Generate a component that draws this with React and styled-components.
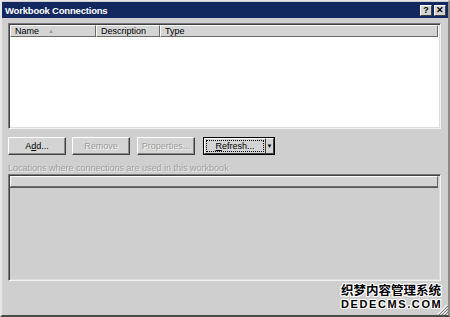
import React from 'react';
import styled, { createGlobalStyle } from 'styled-components';

const GlobalStyle = createGlobalStyle`
  * { box-sizing: border-box; }
  body {
    margin: 0;
    background: #cfcfcf;
    font-family: "Liberation Sans", Arial, sans-serif;
  }
`;

const Window = styled.div`
  position: relative;
  width: 450px;
  height: 317px;
  background: #cfcfcf;
  border-top: 1px solid #e6e6e6;
  border-left: 2px solid #e6e6e6;
  border-right: 2px solid #8a8a8a;
  border-bottom: 2px solid #4a4a4a;
  display: flex;
  flex-direction: column;
  overflow: hidden;
`;

const TitleBar = styled.div`
  height: 16px;
  margin-top: 1px;
  background: #13285f;
  color: #fff;
  display: flex;
  align-items: center;
  padding: 0 2px 0 3px;
`;

const Title = styled.div`
  flex: 1;
  font-size: 9.5px;
  font-weight: bold;
  letter-spacing: -0.2px;
`;

const CapButton = styled.div`
  width: 12px;
  height: 11px;
  margin-left: 2px;
  background: #d4d4d4;
  border-top: 1px solid #fff;
  border-left: 1px solid #fff;
  border-right: 1px solid #404040;
  border-bottom: 1px solid #404040;
  color: #000;
  font-size: 9px;
  font-weight: bold;
  line-height: 9px;
  text-align: center;
`;

const Body = styled.div`
  flex: 1;
  padding: 5px 7px 0 6px;
  display: flex;
  flex-direction: column;
`;

const ListView = styled.div`
  height: ${p => p.$h}px;
  background: ${p => (p.$disabled ? '#cfcfcf' : '#fff')};
  border-top: 1px solid #7a7a7a;
  border-left: 1px solid #7a7a7a;
  border-right: 1px solid #f2f2f2;
  border-bottom: 1px solid #f2f2f2;
  box-shadow: inset 1px 1px 0 #404040, inset -1px -1px 0 #dcdcdc;
  padding: 1px 2px 2px 1px;
`;

const Header = styled.div`
  display: flex;
  height: 12px;
  ${p => p.$disabled && 'border-bottom: 1px solid #5a5a5a;'}
`;

const HeaderCell = styled.div`
  width: ${p => (p.$w ? `${p.$w}px` : 'auto')};
  flex: ${p => (p.$w ? 'none' : 1)};
  background: #d4d4d4;
  border-top: 1px solid #fff;
  border-left: 1px solid #fff;
  border-right: 1px solid #6a6a6a;
  border-bottom: 1px solid #6a6a6a;
  font-size: 9px;
  line-height: 10px;
  padding-left: 4px;
  color: #000;
  display: flex;
  align-items: center;
  gap: 9px;
`;

const SortArrow = styled.span`
  color: #9a9a9a;
  font-size: 6px;
`;

const ButtonRow = styled.div`
  display: flex;
  margin-top: 8px;
  height: 18px;
`;

const Button = styled.div`
  width: ${p => p.$w}px;
  margin-right: ${p => p.$mr}px;
  height: 18px;
  background: #d4d4d4;
  border-top: 1px solid #fff;
  border-left: 1px solid #fff;
  border-right: 1px solid #404040;
  border-bottom: 1px solid #404040;
  box-shadow: inset -1px -1px 0 #8a8a8a;
  font-size: 9px;
  color: ${p => (p.$disabled ? '#9c9c9c' : '#000')};
  text-shadow: ${p => (p.$disabled ? '1px 1px 0 #f4f4f4' : 'none')};
  display: flex;
  align-items: center;
  justify-content: center;
`;

const SplitButton = styled.div`
  display: flex;
  height: 18px;
  border: 1px solid #000;
`;

const SplitMain = styled.div`
  width: 62px;
  background: #d4d4d4;
  border-top: 1px solid #fff;
  border-left: 1px solid #fff;
  border-right: 1px solid #404040;
  border-bottom: 1px solid #404040;
  padding: 1px;
  font-size: 9px;
  display: flex;
`;

const Focus = styled.div`
  flex: 1;
  border: 1px dotted #000;
  display: flex;
  align-items: center;
  justify-content: center;
`;

const SplitArrow = styled.div`
  width: 8px;
  background: #d4d4d4;
  border-top: 1px solid #fff;
  border-right: 1px solid #404040;
  border-bottom: 1px solid #404040;
  font-size: 6px;
  display: flex;
  align-items: center;
  justify-content: center;
`;

const Label = styled.div`
  margin-top: 8px;
  height: 10px;
  font-size: 9px;
  line-height: 10px;
  color: #a0a0a0;
  text-shadow: 1px 1px 0 #ececec;
  margin-bottom: 1px;
`;

const Grip = styled.svg`
  position: absolute;
  right: 0;
  bottom: 0;
`;

const Watermark = styled.div`
  position: absolute;
  left: 339px;
  top: 281px;
  width: 104px;
  font-weight: bold;
  color: #000;
  text-shadow: 1px 0 0 #fff, -1px 0 0 #fff, 0 1px 0 #fff, 0 -1px 0 #fff, 1px 1px 0 #fff, -1px -1px 0 #fff, 1px -1px 0 #fff, -1px 1px 0 #fff;
`;

const WmLine = styled.div`
  font-size: ${p => p.$size}px;
  line-height: ${p => p.$lh}px;
  letter-spacing: ${p => p.$ls}px;
  font-family: ${p => (p.$latin ? '"Liberation Sans", Arial, sans-serif' : '"Noto Sans CJK SC", sans-serif')};
  white-space: nowrap;
`;

export default function App() {
  return (
    <>
      <GlobalStyle />
      <Window>
        <TitleBar>
          <Title>Workbook Connections</Title>
          <CapButton>?</CapButton>
          <CapButton>✕</CapButton>
        </TitleBar>
        <Body>
          <ListView $h={106}>
            <Header>
              <HeaderCell $w={86}>
                Name <SortArrow>▲</SortArrow>
              </HeaderCell>
              <HeaderCell $w={64}>Description</HeaderCell>
              <HeaderCell>Type</HeaderCell>
            </Header>
          </ListView>

          <ButtonRow>
            <Button $w={58} $mr={6}>
              A<u>d</u>d...
            </Button>
            <Button $w={58} $mr={7} $disabled>
              Remove
            </Button>
            <Button $w={58} $mr={8} $disabled>
              Properties...
            </Button>
            <SplitButton>
              <SplitMain>
                <Focus>
                  <u>R</u>efresh...
                </Focus>
              </SplitMain>
              <SplitArrow>▼</SplitArrow>
            </SplitButton>
          </ButtonRow>

          <Label>Locations where connections are used in this workbook</Label>

          <ListView $h={107} $disabled>
            <Header $disabled>
              <HeaderCell />
            </Header>
          </ListView>
        </Body>

        <Grip width="12" height="12" viewBox="0 0 12 12">
          <path d="M11 2 L2 11 M11 5 L5 11 M11 8 L8 11" stroke="#fff" strokeWidth="1" />
          <path d="M12 3 L3 12 M12 6 L6 12 M12 9 L9 12" stroke="#7a7a7a" strokeWidth="1" />
        </Grip>

        <Watermark>
          <WmLine $size={12.5} $lh={16} $ls={0}>织梦内容管理系统</WmLine>
          <WmLine $size={11} $lh={13} $ls={1.6} $latin>DEDECMS.COM</WmLine>
        </Watermark>
      </Window>
    </>
  );
}
